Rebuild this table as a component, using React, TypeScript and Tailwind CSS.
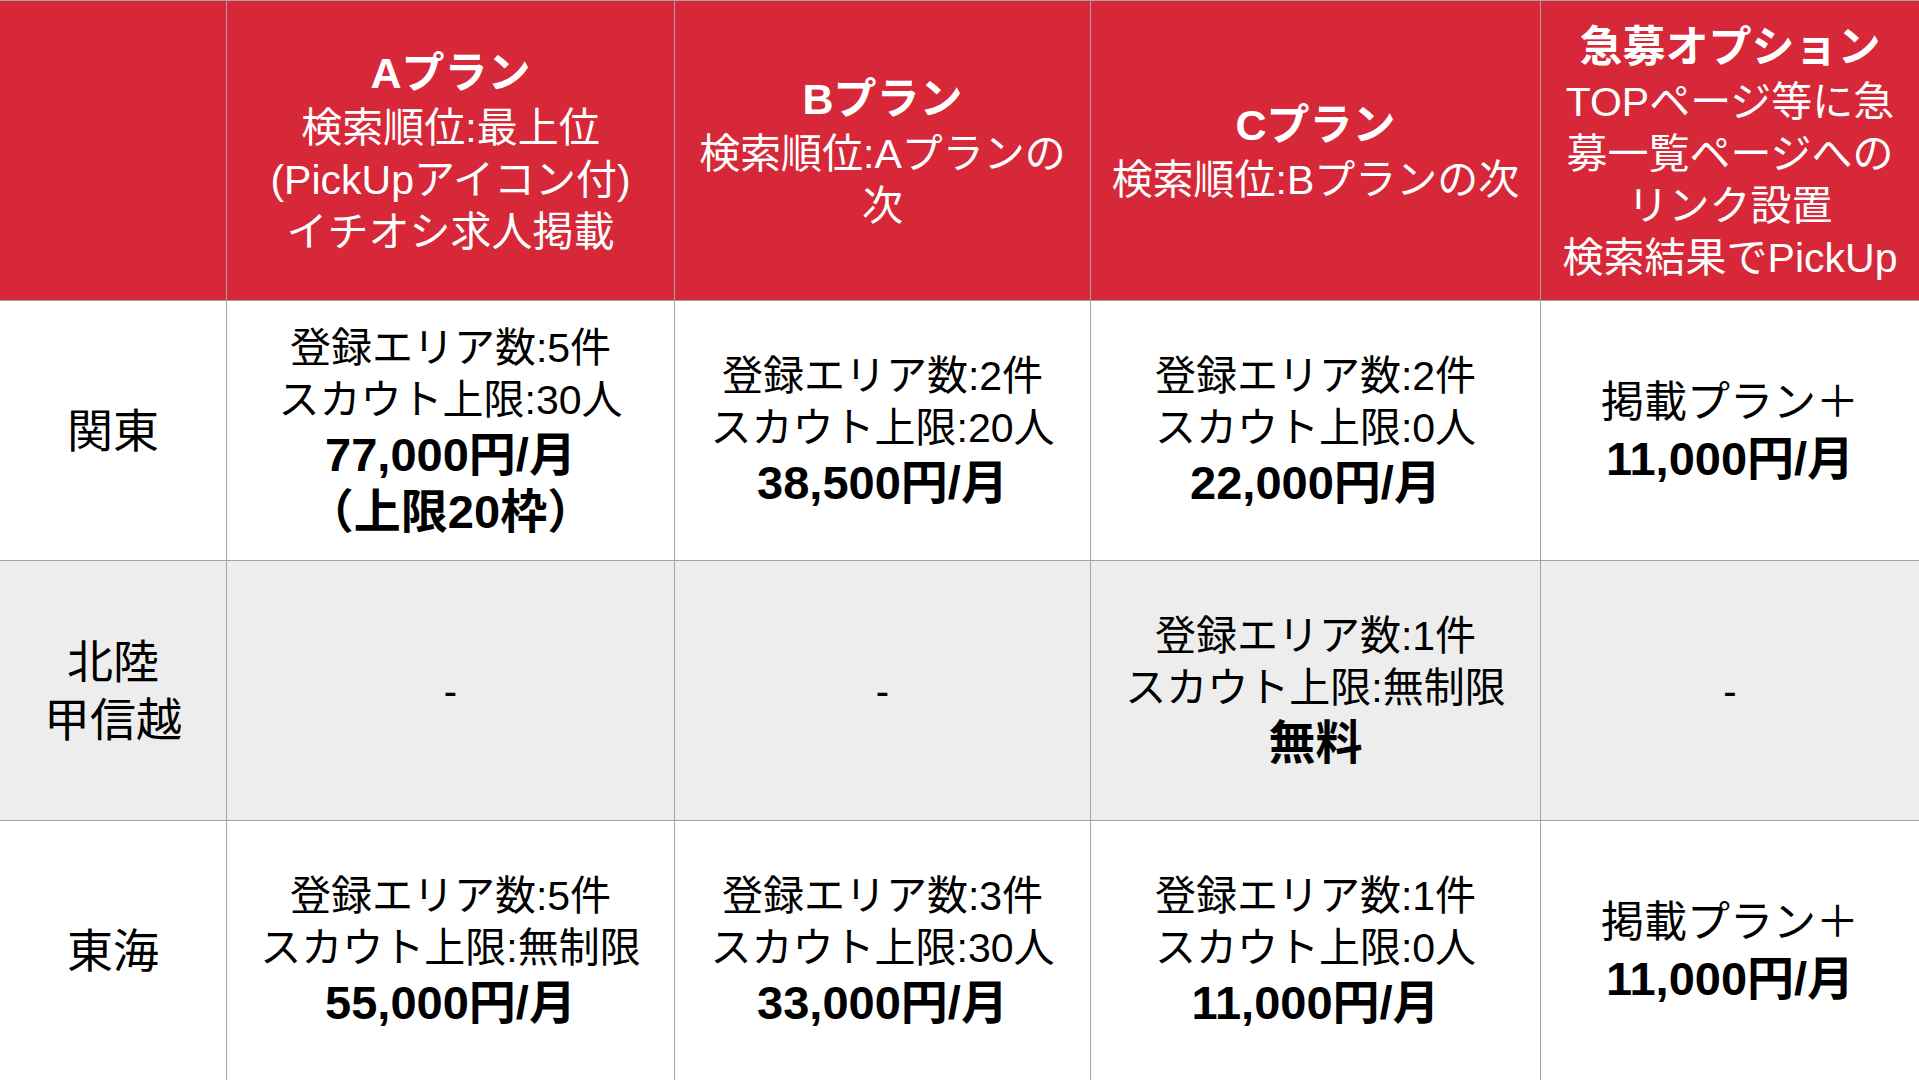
import React from "react";

/**
 * 料金プラン表 - エリア別
 */

type Cell = { lines: string[]; bold?: string[] } | null;

const headers = [
  { title: "Aプラン", sub: ["検索順位:最上位", "(PickUpアイコン付)", "イチオシ求人掲載"] },
  { title: "Bプラン", sub: ["検索順位:Aプランの", "次"] },
  { title: "Cプラン", sub: ["検索順位:Bプランの次"] },
  {
    title: "急募オプション",
    sub: ["TOPページ等に急", "募一覧ページへの", "リンク設置", "検索結果でPickUp"],
  },
];

const rows: { area: string[]; gray?: boolean; cells: Cell[] }[] = [
  {
    area: ["関東"],
    cells: [
      { lines: ["登録エリア数:5件", "スカウト上限:30人"], bold: ["77,000円/月", "（上限20枠）"] },
      { lines: ["登録エリア数:2件", "スカウト上限:20人"], bold: ["38,500円/月"] },
      { lines: ["登録エリア数:2件", "スカウト上限:0人"], bold: ["22,000円/月"] },
      { lines: ["掲載プラン＋"], bold: ["11,000円/月"] },
    ],
  },
  {
    area: ["北陸", "甲信越"],
    gray: true,
    cells: [
      null,
      null,
      { lines: ["登録エリア数:1件", "スカウト上限:無制限"], bold: ["無料"] },
      null,
    ],
  },
  {
    area: ["東海"],
    cells: [
      { lines: ["登録エリア数:5件", "スカウト上限:無制限"], bold: ["55,000円/月"] },
      { lines: ["登録エリア数:3件", "スカウト上限:30人"], bold: ["33,000円/月"] },
      { lines: ["登録エリア数:1件", "スカウト上限:0人"], bold: ["11,000円/月"] },
      { lines: ["掲載プラン＋"], bold: ["11,000円/月"] },
    ],
  },
];

export default function App() {
  return (
    <div
      className="w-[1919px] h-[1080px] bg-[#a3a3a3] pt-px grid grid-cols-[226px_447px_415px_449px_378px] grid-rows-[299px_259px_259px_259px] gap-px overflow-hidden text-black"
      style={{ fontFamily: '"Liberation Sans", "Noto Sans CJK JP", sans-serif' }}
    >
      {/* Header */}
      <div className="bg-[#d62839]" />
      {headers.map((h, i) => (
        <div
          key={i}
          className="bg-[#d62839] flex flex-col items-center justify-center text-white text-center whitespace-nowrap"
        >
          <div className="text-[43px] leading-[58px] font-bold">{h.title}</div>
          {h.sub.map((s, j) => (
            <div key={j} className="text-[41px] leading-[52px]">
              {s}
            </div>
          ))}
        </div>
      ))}

      {/* Body rows */}
      {rows.map((r, ri) => (
        <React.Fragment key={ri}>
          <div
            className={`${r.gray ? "bg-[#ededed]" : "bg-white"} flex flex-col items-center justify-center text-center`}
          >
            {r.area.map((a, k) => (
              <div key={k} className="text-[46px] leading-[58px]">
                {a}
              </div>
            ))}
          </div>
          {r.cells.map((c, ci) => (
            <div
              key={ci}
              className={`${r.gray ? "bg-[#ededed]" : "bg-white"} flex flex-col items-center justify-center text-center whitespace-nowrap`}
            >
              {c === null ? (
                <div className="text-[40px] leading-[52px]">-</div>
              ) : (
                <>
                  {c.lines.map((l, k) => (
                    <div
                      key={k}
                      className={`${c.lines.length === 1 ? "text-[43px] leading-[56px]" : "text-[41px] leading-[52px]"}`}
                    >
                      {l}
                    </div>
                  ))}
                  {c.bold?.map((b, k) => (
                    <div key={k} className="text-[47px] leading-[57px] font-bold">
                      {b}
                    </div>
                  ))}
                </>
              )}
            </div>
          ))}
        </React.Fragment>
      ))}
    </div>
  );
}
